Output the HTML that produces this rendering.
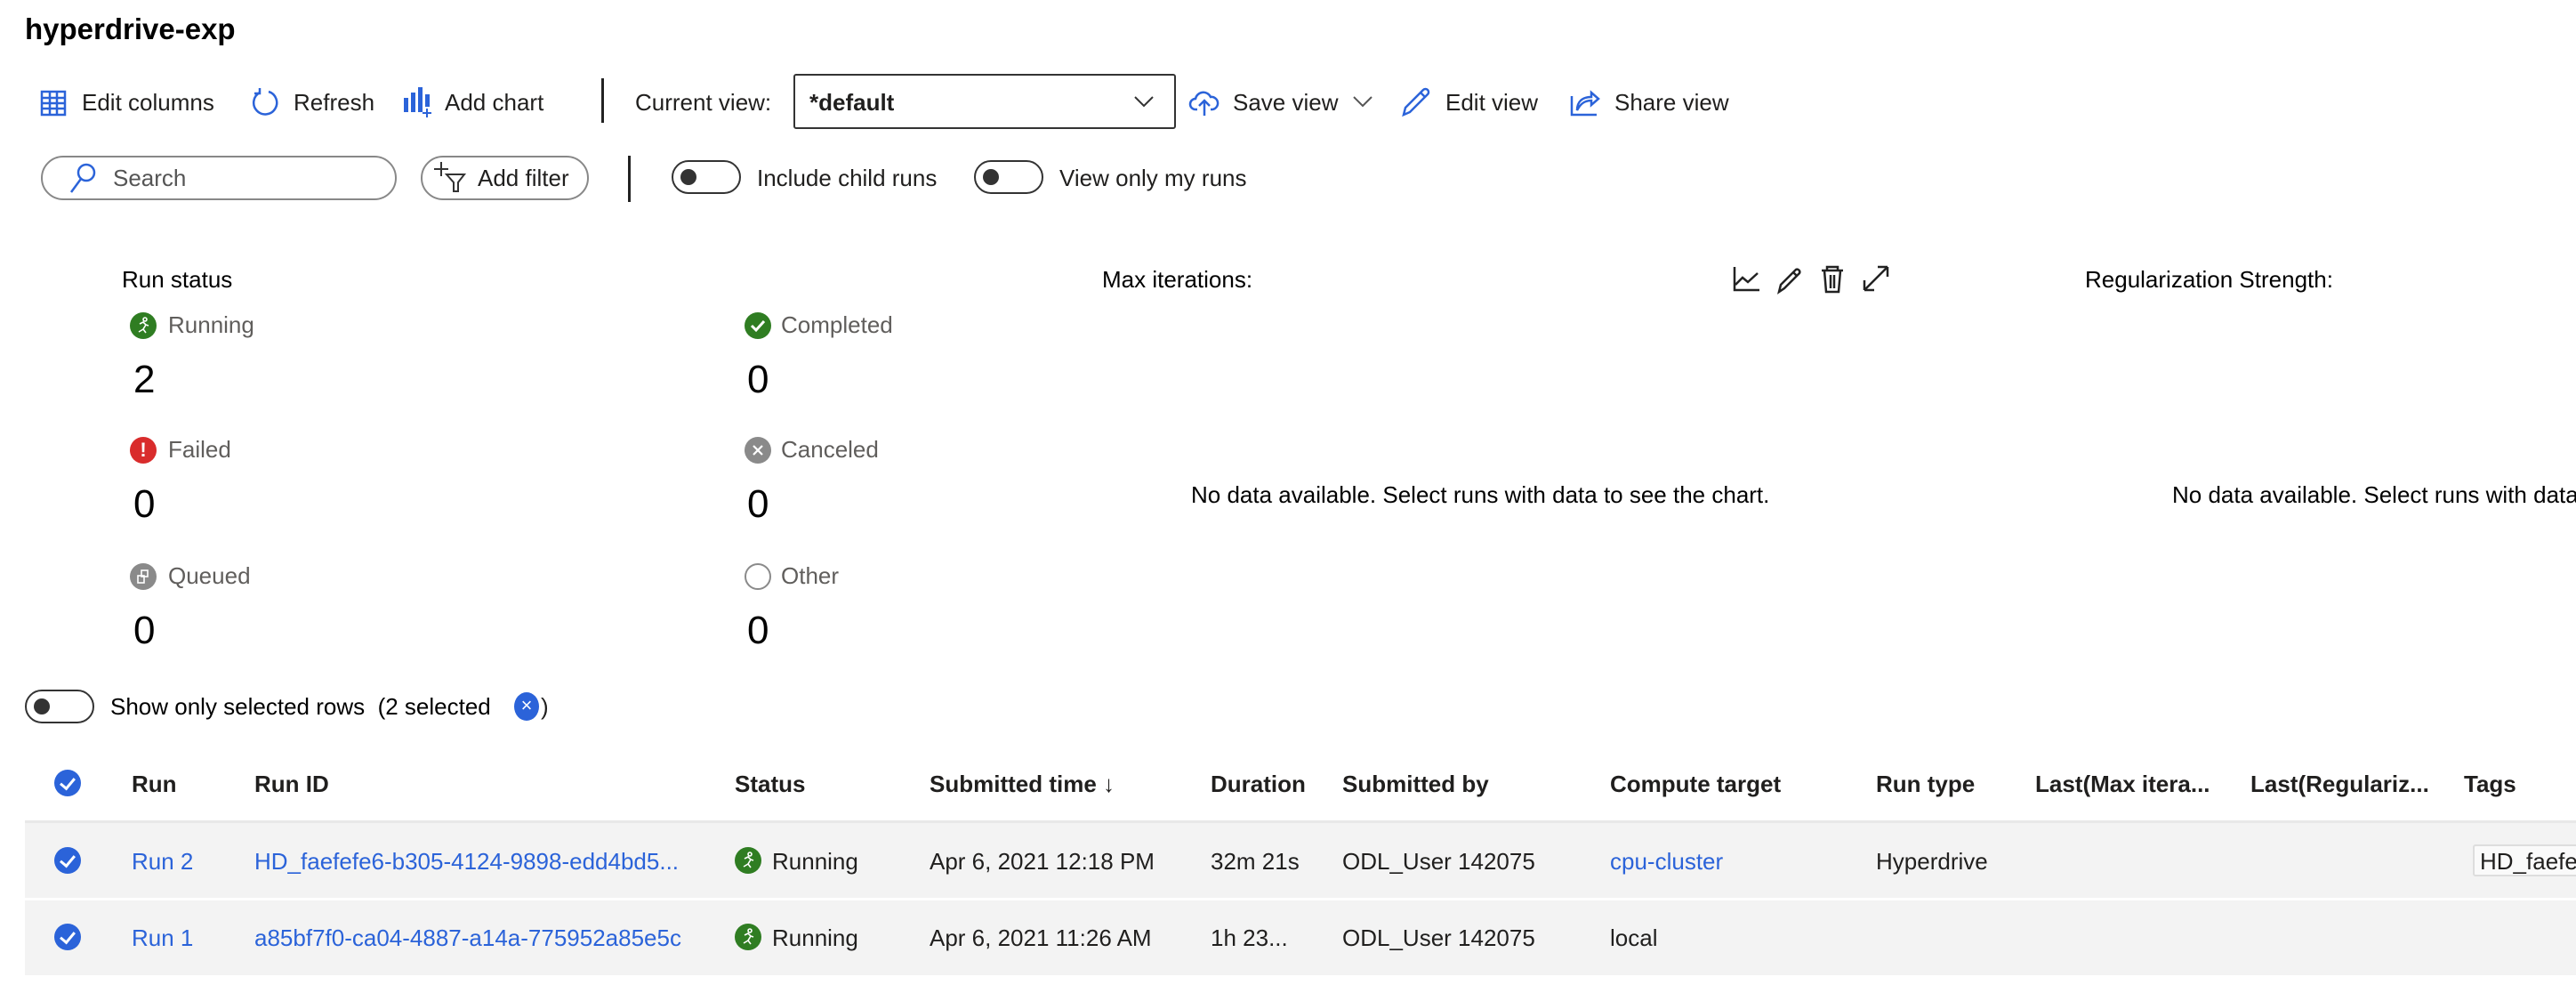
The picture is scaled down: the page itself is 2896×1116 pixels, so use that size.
<!DOCTYPE html>
<html style="overflow:hidden"><head><meta charset="utf-8"><style>
html,body{overflow:hidden}
body{margin:0;width:2896px;height:1116px;background:#fff;font-family:"Liberation Sans",sans-serif;color:#201f1e;position:relative;overflow:hidden}
.a{position:absolute;white-space:nowrap}
.t{font-size:26px;line-height:30px}
.blue{color:#2b63d9}
.tg{position:absolute;width:78px;height:38px;border:2px solid #333;border-radius:22px;box-sizing:border-box}
.tg:after{content:"";position:absolute;left:8px;top:8px;width:18px;height:18px;border-radius:50%;background:#333}
.num{font-size:44px;line-height:50px;color:#000}
.lab{font-size:26px;color:#605e5c}
.ic{position:absolute;width:30px;height:30px;border-radius:50%}
.row{position:absolute;left:28px;width:2868px;height:84px;background:#f3f3f3}
.cb{position:absolute;width:30px;height:30px;border-radius:50%;background:#2b63d9}
.cb:after{content:"";position:absolute;left:10px;top:6px;width:7px;height:13px;border:solid #fff;border-width:0 3px 3px 0;transform:rotate(40deg)}
.h{font-weight:bold;font-size:26px}
</style></head><body>
<div class="a" style="left:28px;top:14px;font-size:33px;font-weight:bold;color:#000">hyperdrive-exp</div>

<svg class="a" style="left:44px;top:100px" width="32" height="32" viewBox="0 0 32 32" fill="none" stroke="#2b63d9" stroke-width="2.5"><rect x="3" y="3" width="26" height="26"/><path d="M3 10h26M3 16h26M3 22h26M12 3v26M20 3v26"/></svg>
<div class="a t" style="left:92px;top:100px">Edit columns</div>
<svg class="a" style="left:280px;top:98px" width="36" height="36" viewBox="0 0 36 36" fill="none" stroke="#2b63d9" stroke-width="2.5"><path d="M12 6A13 13 0 1 0 22 5"/><path d="M12 1v6h-6"/></svg>
<div class="a t" style="left:330px;top:100px">Refresh</div>
<svg class="a" style="left:452px;top:96px" width="36" height="36" viewBox="0 0 36 36" fill="#2b63d9"><rect x="2" y="14" width="5" height="16"/><rect x="10" y="8" width="5" height="22"/><rect x="18" y="2" width="5" height="28"/><rect x="26" y="10" width="5" height="14"/><path d="M28 26v10M23 31h10" stroke="#2b63d9" stroke-width="2"/></svg>
<div class="a t" style="left:500px;top:100px">Add chart</div>
<div class="a" style="left:676px;top:88px;width:3px;height:50px;background:#222"></div>
<div class="a t" style="left:714px;top:100px">Current view:</div>
<div class="a" style="left:892px;top:83px;width:430px;height:62px;border:2px solid #333;border-radius:3px;box-sizing:border-box"></div>
<div class="a t" style="left:910px;top:100px;font-weight:bold">*default</div>
<svg class="a" style="left:1274px;top:106px" width="24" height="16" viewBox="0 0 24 16" fill="none" stroke="#333" stroke-width="2"><path d="M2 3l10 10 10-10"/></svg>
<svg class="a" style="left:1336px;top:96px" width="36" height="36" viewBox="0 0 36 36" fill="none" stroke="#2b63d9" stroke-width="2.5"><path d="M10 27H8a6 6 0 0 1 0-12 9 9 0 0 1 17-2 7 7 0 0 1 2 14h-2"/><path d="M18 34V18M12 23l6-6 6 6"/></svg>
<div class="a t" style="left:1386px;top:100px">Save view</div>
<svg class="a" style="left:1520px;top:106px" width="24" height="16" viewBox="0 0 24 16" fill="none" stroke="#555" stroke-width="2"><path d="M2 3l10 10 10-10"/></svg>
<svg class="a" style="left:1574px;top:96px" width="36" height="36" viewBox="0 0 36 36" fill="none" stroke="#2b63d9" stroke-width="2.5"><path d="M4 33l2-8L26 5a3 3 0 0 1 5 5L11 30z M23 8l5 5"/></svg>
<div class="a t" style="left:1625px;top:100px">Edit view</div>
<svg class="a" style="left:1764px;top:96px" width="36" height="36" viewBox="0 0 36 36" fill="none" stroke="#2b63d9" stroke-width="2.5"><path d="M3 12v21h28"/><path d="M9 28c0-10 6-15 16-15V8l8 7-8 7v-5c-7 0-12 3-16 11z"/></svg>
<div class="a t" style="left:1815px;top:100px">Share view</div>

<div class="a" style="left:46px;top:175px;width:400px;height:50px;border:2px solid #888;border-radius:26px;box-sizing:border-box"></div>
<svg class="a" style="left:76px;top:182px" width="34" height="36" viewBox="0 0 34 36" fill="none" stroke="#2b63d9" stroke-width="2.5"><circle cx="21" cy="12" r="9"/><path d="M15 19L4 34"/></svg>
<div class="a t" style="left:127px;top:185px;color:#555">Search</div>
<div class="a" style="left:473px;top:175px;width:189px;height:50px;border:2px solid #888;border-radius:26px;box-sizing:border-box"></div>
<svg class="a" style="left:488px;top:180px" width="44" height="36" viewBox="0 0 44 36" fill="none" stroke="#333" stroke-width="2"><path d="M8 2v16M0 10h16"/><path d="M14 16h20l-7 9v10h-5V25z"/></svg>
<div class="a t" style="left:537px;top:185px">Add filter</div>
<div class="a" style="left:706px;top:175px;width:3px;height:52px;background:#222"></div>
<div class="tg" style="left:755px;top:180px"></div>
<div class="a t" style="left:851px;top:185px">Include child runs</div>
<div class="tg" style="left:1095px;top:180px"></div>
<div class="a t" style="left:1191px;top:185px">View only my runs</div>

<div class="a t" style="left:137px;top:299px;color:#000">Run status</div>
<div class="ic" style="left:146px;top:351px;background:#2f7d22"></div>
<svg class="a" style="left:149px;top:354px" width="24" height="24" viewBox="0 0 24 24" fill="none" stroke="#fff" stroke-width="1.6"><circle cx="14" cy="5" r="2"/><path d="M8 10l4-2 3 3-3 5 3 4M12 16l-5 3M15 11l3 1"/></svg>
<div class="a lab" style="left:189px;top:350px">Running</div>
<div class="a num" style="left:150px;top:402px">2</div>
<div class="ic" style="left:837px;top:351px;background:#2f7d22"></div>
<svg class="a" style="left:837px;top:351px" width="30" height="30" viewBox="0 0 30 30" fill="none" stroke="#fff" stroke-width="3"><path d="M8 15l5 5 9-10"/></svg>
<div class="a lab" style="left:878px;top:350px">Completed</div>
<div class="a num" style="left:840px;top:402px">0</div>

<div class="ic" style="left:146px;top:491px;background:#d92c2c"></div>
<div class="a" style="left:146px;top:491px;width:30px;text-align:center;color:#fff;font-weight:bold;font-size:22px;line-height:30px">!</div>
<div class="a lab" style="left:189px;top:490px">Failed</div>
<div class="a num" style="left:150px;top:542px">0</div>
<div class="ic" style="left:837px;top:491px;background:#8a8a8a"></div>
<svg class="a" style="left:837px;top:491px" width="30" height="30" viewBox="0 0 30 30" fill="none" stroke="#fff" stroke-width="2.2"><path d="M10 10l10 10M20 10L10 20"/></svg>
<div class="a lab" style="left:878px;top:490px">Canceled</div>
<div class="a num" style="left:840px;top:542px">0</div>

<div class="ic" style="left:146px;top:633px;background:#8a8a8a"></div>
<svg class="a" style="left:146px;top:633px" width="30" height="30" viewBox="0 0 30 30" fill="none" stroke="#fff" stroke-width="1.6"><rect x="13" y="8" width="7" height="7"/><rect x="9" y="14" width="7" height="8"/></svg>
<div class="a lab" style="left:189px;top:632px">Queued</div>
<div class="a num" style="left:150px;top:684px">0</div>
<div class="ic" style="left:837px;top:633px;border:2px solid #8a8a8a;box-sizing:border-box"></div>
<div class="a lab" style="left:878px;top:632px">Other</div>
<div class="a num" style="left:840px;top:684px">0</div>

<div class="a t" style="left:1239px;top:299px;color:#000">Max iterations:</div>
<svg class="a" style="left:1948px;top:296px" width="180" height="36" viewBox="0 0 180 36" fill="none" stroke="#222" stroke-width="2.5"><path d="M2 4v26h28M3 24l8-8 6 5 11-10"/><path d="M52 32l2-8 17-17a3 3 0 0 1 4 4L58 28zM68 10l4 4"/><path d="M100 8h24M106 8V4h12v4M103 8l2 24h14l2-24M110 13v15M114 13v15"/><path d="M148 30l26-26M148 30v-11M148 30h11M174 4h-11M174 4v11"/></svg>
<div class="a t" style="left:1339px;top:541px;color:#000">No data available. Select runs with data to see the chart.</div>
<div class="a t" style="left:2344px;top:299px;color:#000">Regularization Strength:</div>
<div class="a t" style="left:2442px;top:541px;color:#000">No data available. Select runs with data to see the chart.</div>

<div class="tg" style="left:28px;top:775px"></div>
<div class="a t" style="left:124px;top:779px;color:#000">Show only selected rows &nbsp;(2 selected</div>
<div class="a" style="left:578px;top:778px;width:28px;height:32px;border-radius:50%;background:#2b63d9;color:#fff;text-align:center;font-size:22px;line-height:30px">×</div>
<div class="a t" style="left:608px;top:779px">)</div>

<div class="cb" style="left:61px;top:865px"></div>
<div class="a h" style="left:148px;top:866px">Run</div>
<div class="a h" style="left:286px;top:866px">Run ID</div>
<div class="a h" style="left:826px;top:866px">Status</div>
<div class="a h" style="left:1045px;top:866px">Submitted time ↓</div>
<div class="a h" style="left:1361px;top:866px">Duration</div>
<div class="a h" style="left:1509px;top:866px">Submitted by</div>
<div class="a h" style="left:1810px;top:866px">Compute target</div>
<div class="a h" style="left:2109px;top:866px">Run type</div>
<div class="a h" style="left:2288px;top:866px">Last(Max itera...</div>
<div class="a h" style="left:2530px;top:866px">Last(Regulariz...</div>
<div class="a h" style="left:2770px;top:866px">Tags</div>
<div class="a" style="left:28px;top:922px;width:2868px;height:3px;background:#e8e8e8"></div>

<div class="row" style="top:925px"></div>
<div class="row" style="top:1012px"></div>
<div class="cb" style="left:61px;top:952px"></div>
<div class="cb" style="left:61px;top:1038px"></div>

<div class="a t blue" style="left:148px;top:953px">Run 2</div>
<div class="a t blue" style="left:286px;top:953px">HD_faefefe6-b305-4124-9898-edd4bd5...</div>
<div class="ic" style="left:826px;top:952px;background:#2f7d22"></div>
<svg class="a" style="left:829px;top:955px" width="24" height="24" viewBox="0 0 24 24" fill="none" stroke="#fff" stroke-width="1.6"><circle cx="14" cy="5" r="2"/><path d="M8 10l4-2 3 3-3 5 3 4M12 16l-5 3M15 11l3 1"/></svg>
<div class="a t" style="left:868px;top:953px">Running</div>
<div class="a t" style="left:1045px;top:953px">Apr 6, 2021 12:18 PM</div>
<div class="a t" style="left:1361px;top:953px">32m 21s</div>
<div class="a t" style="left:1509px;top:953px">ODL_User 142075</div>
<div class="a t blue" style="left:1810px;top:953px">cpu-cluster</div>
<div class="a t" style="left:2109px;top:953px">Hyperdrive</div>
<div class="a" style="left:2780px;top:949px;width:140px;height:36px;border:2px solid #ddd;border-radius:3px;background:#fafafa;box-sizing:border-box"></div>
<div class="a t" style="left:2788px;top:953px">HD_faefe</div>

<div class="a t blue" style="left:148px;top:1039px">Run 1</div>
<div class="a t blue" style="left:286px;top:1039px">a85bf7f0-ca04-4887-a14a-775952a85e5c</div>
<div class="ic" style="left:826px;top:1038px;background:#2f7d22"></div>
<svg class="a" style="left:829px;top:1041px" width="24" height="24" viewBox="0 0 24 24" fill="none" stroke="#fff" stroke-width="1.6"><circle cx="14" cy="5" r="2"/><path d="M8 10l4-2 3 3-3 5 3 4M12 16l-5 3M15 11l3 1"/></svg>
<div class="a t" style="left:868px;top:1039px">Running</div>
<div class="a t" style="left:1045px;top:1039px">Apr 6, 2021 11:26 AM</div>
<div class="a t" style="left:1361px;top:1039px">1h 23...</div>
<div class="a t" style="left:1509px;top:1039px">ODL_User 142075</div>
<div class="a t" style="left:1810px;top:1039px">local</div>
</body></html>
